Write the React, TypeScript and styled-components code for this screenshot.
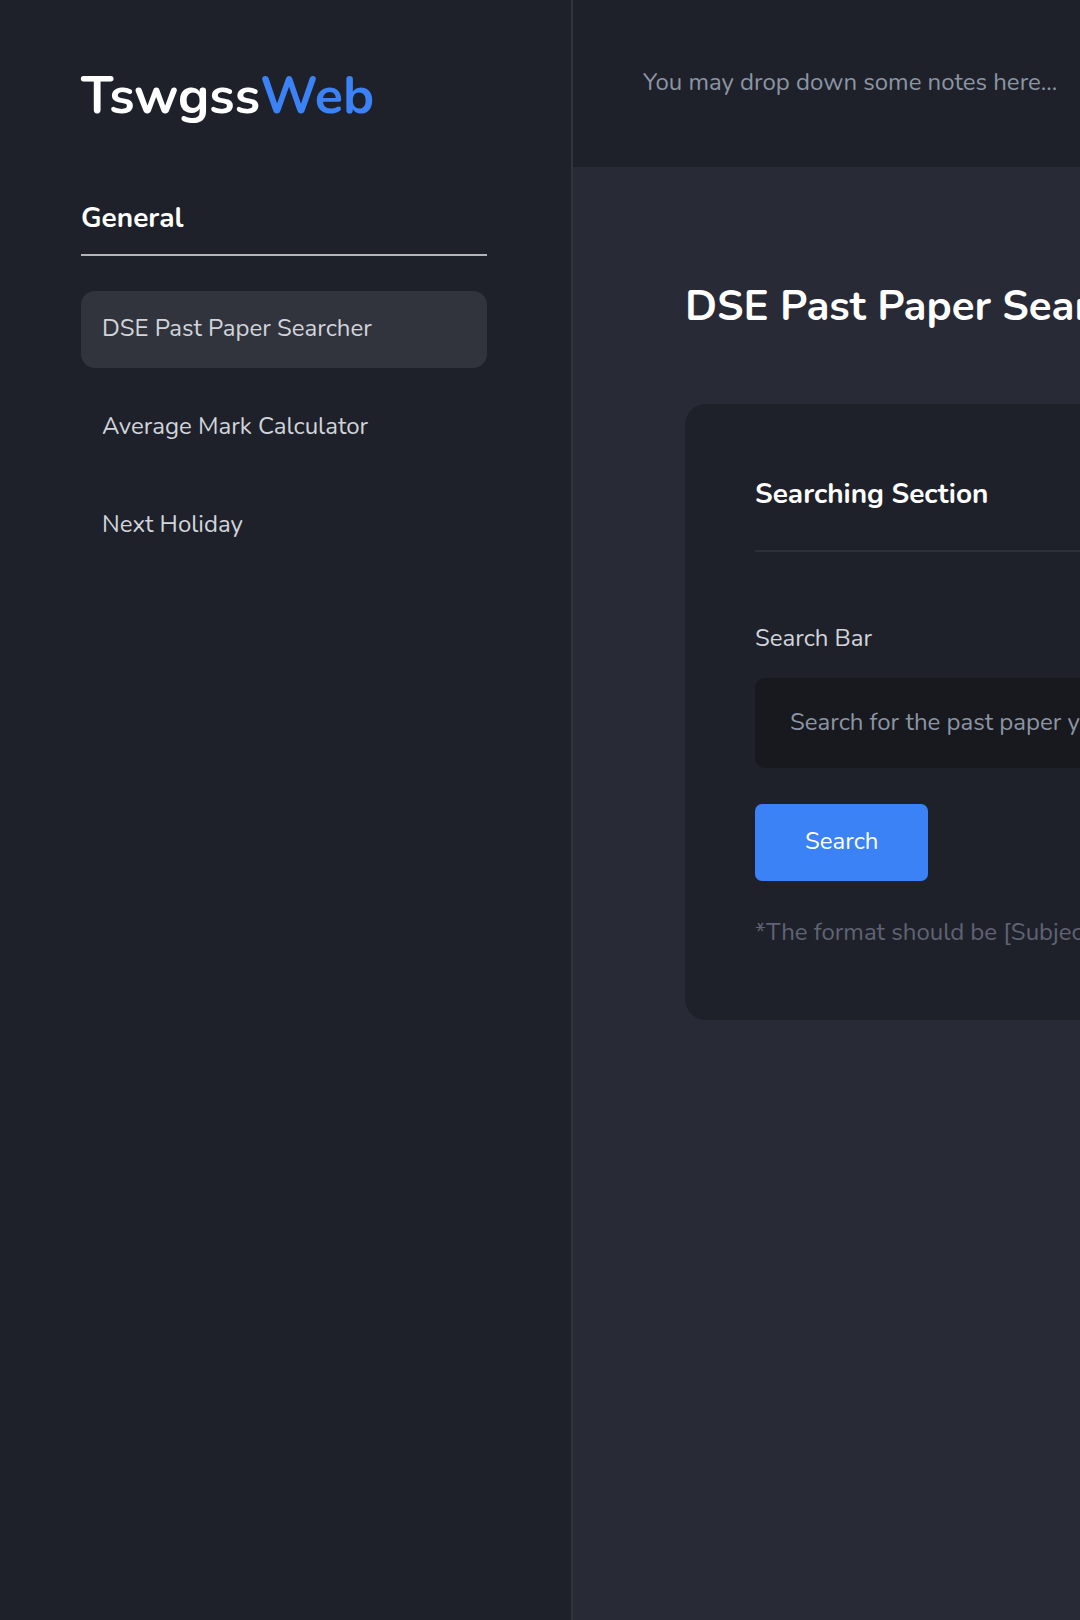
import React from "react";
import styled, { createGlobalStyle } from "styled-components";

const GlobalStyle = createGlobalStyle`
  *, *::before, *::after { box-sizing: border-box; }
  body { margin: 0; background: #282a36; }
  h1, h2, p { margin: 0; }
  button, input { font: inherit; }
`;

const Page = styled.div`
  display: flex;
  min-height: 100vh;
  overflow: hidden;
  color: #d1d5db;
  font-family: Nunito, "Open Sans", sans-serif;
  font-size: 24px;
  line-height: 36px;
`;

const Sidebar = styled.aside`
  flex: 0 0 573px;
  padding: 66px 84px 64px 81px;
  background: #1f212a;
  border-right: 2px solid #32343d;
`;

const Brand = styled.p`
  color: #ffffff;
  font-size: 52px;
  font-weight: 700;
  line-height: 60px;
`;

const BrandAccent = styled.span`
  color: #3b82f6;
`;

const SidebarTitle = styled.h2`
  margin-top: 74px;
  padding-bottom: 18px;
  border-bottom: 2px solid #b4b5bb;
  color: #ffffff;
  font-size: 28px;
  font-weight: 700;
  line-height: 36px;
`;

const NavList = styled.nav`
  display: flex;
  flex-direction: column;
  gap: 21px;
  margin-top: 35px;
`;

const NavLink = styled.a<{ $active?: boolean }>`
  padding: 19px 21px 22px;
  border-radius: 14px;
  background: ${({ $active }) => ($active ? "#32343d" : "transparent")};
  color: #d1d5db;
  text-decoration: none;
`;

const Content = styled.div`
  flex: 1 0 1200px;
`;

const Header = styled.header`
  display: flex;
  height: 167px;
  padding: 0 70px 4px;
  background: #1f212a;
`;

const NotesInput = styled.input`
  flex: 1;
  padding: 0;
  border: 0;
  outline: 0;
  background: transparent;
  color: #d1d5db;

  &::placeholder { color: #8b95a3; opacity: 1; }
`;

const Main = styled.main`
  padding: 112px;
`;

const PageTitle = styled.h1`
  color: #ffffff;
  font-size: 42px;
  font-weight: 700;
  line-height: 56px;
`;

const Card = styled.section`
  margin-top: 69px;
  padding: 70px;
  border-radius: 21px;
  background: #1f212a;
`;

const CardTitle = styled.h2`
  padding-bottom: 36px;
  border-bottom: 2px solid #2e3039;
  color: #ffffff;
  font-size: 28px;
  font-weight: 700;
  line-height: 40px;
`;

const SearchForm = styled.form`
  display: flex;
  flex-direction: column;
  align-items: flex-start;
  margin-top: 68px;
`;

const SearchInput = styled.input`
  width: 100%;
  height: 90px;
  margin: 22px 0 36px;
  padding: 0 35px 2px;
  border: 0;
  border-radius: 10px;
  outline: 0;
  background: #18191e;
  color: #d1d5db;

  &::placeholder { color: #8b95a3; opacity: 1; }
`;

const SearchButton = styled.button`
  height: 77px;
  padding: 0 50px 4px;
  border: 0;
  border-radius: 7px;
  background: #3b82f6;
  color: #ffffff;
`;

const Hint = styled.p`
  margin-top: 33px;
  color: #5f6373;
`;

const pages = ["DSE Past Paper Searcher", "Average Mark Calculator", "Next Holiday"];

export default function App() {
  return (
    <Page>
      <GlobalStyle />
      <Sidebar>
        <Brand>
          Tswgss<BrandAccent>Web</BrandAccent>
        </Brand>
        <SidebarTitle>General</SidebarTitle>
        <NavList aria-label="General">
          {pages.map((page, index) => (
            <NavLink key={page} href="#" $active={index === 0}>
              {page}
            </NavLink>
          ))}
        </NavList>
      </Sidebar>
      <Content>
        <Header>
          <NotesInput aria-label="Notes" placeholder="You may drop down some notes here..." />
        </Header>
        <Main>
          <PageTitle>DSE Past Paper Searcher</PageTitle>
          <Card>
            <CardTitle>Searching Section</CardTitle>
            <SearchForm onSubmit={(event) => event.preventDefault()}>
              <label htmlFor="paper-search">Search Bar</label>
              <SearchInput id="paper-search" placeholder="Search for the past paper you want" />
              <SearchButton type="submit">Search</SearchButton>
              <Hint>*The format should be [Subject] [Year]</Hint>
            </SearchForm>
          </Card>
        </Main>
      </Content>
    </Page>
  );
}
